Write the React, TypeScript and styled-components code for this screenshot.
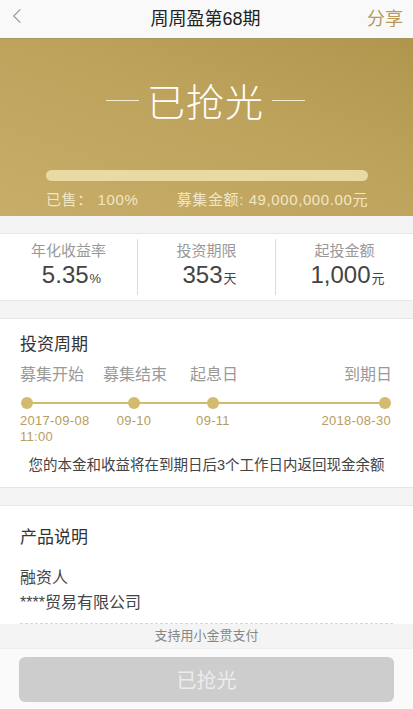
import React from 'react';
import styled, { createGlobalStyle } from 'styled-components';

const GlobalStyle = createGlobalStyle`
  body {
    margin: 0;
    background: #f4f4f4;
    font-family: "Liberation Sans", "Noto Sans CJK SC", sans-serif;
  }
`;

const stats = [
  { label: '年化收益率', value: '5.35', unit: '%' },
  { label: '投资期限', value: '353', unit: '天' },
  { label: '起投金额', value: '1,000', unit: '元' },
];

// at: left offset of the label, pos: left offset of the dot
const steps = [
  { name: '募集开始', at: 0, date: '2017-09-08', time: '11:00', pos: 0 },
  { name: '募集结束', at: 83, date: '09-10', pos: 107 },
  { name: '起息日', at: 170, date: '09-11', pos: 186 },
  { name: '到期日', at: 324, date: '2018-08-30', pos: 358 },
];

const App = () => {
  return (
    <Page>
      <GlobalStyle />
      <Header>
        <BackIcon viewBox='0 0 12 20'>
          <path d='M10 2 L2 10 L10 18' />
        </BackIcon>
        <HeaderTitle>周周盈第68期</HeaderTitle>
        <Share>分享</Share>
      </Header>

      <Banner>
        <SoldOut>
          <Rule />
          已抢光
          <Rule />
        </SoldOut>
        <Progress>
          <ProgressFill style={{ width: '100%' }} />
        </Progress>
        <BannerInfo>
          <span>已售： 100%</span>
          <span>募集金额: 49,000,000.00元</span>
        </BannerInfo>
      </Banner>

      <StatCard>
        {stats.map((s, i) => (
          <Stat key={s.label} $divider={i > 0}>
            <StatLabel>{s.label}</StatLabel>
            <StatValue>
              {s.value}
              <small>{s.unit}</small>
            </StatValue>
          </Stat>
        ))}
      </StatCard>

      <Card>
        <CardTitle>投资周期</CardTitle>
        <Timeline>
          {steps.map(s => (
            <StepName key={s.name} style={{ left: s.at }}>
              {s.name}
            </StepName>
          ))}
          <Track />
          {steps.map(s => (
            <Dot key={s.name + 'd'} style={{ left: s.pos + 1 }} />
          ))}
          {steps.map(s => (
            <StepDate key={s.name + 't'} style={{ left: s.pos }} $end={s.pos > 300} $start={s.pos === 0}>
              {s.date}
              {s.time && <br />}
              {s.time}
            </StepDate>
          ))}
        </Timeline>
        <Note>您的本金和收益将在到期日后3个工作日内返回现金余额</Note>
      </Card>

      <ProductCard>
        <CardTitle>产品说明</CardTitle>
        <InfoText>融资人</InfoText>
        <InfoText>****贸易有限公司</InfoText>
        <Dashed />
      </ProductCard>

      <Notice>支持用小金贯支付</Notice>
      <Footer>
        <SubmitButton disabled>已抢光</SubmitButton>
      </Footer>
    </Page>
  );
};

const Page = styled.div`
  width: 413px;
  min-height: 709px;
  background: #f4f4f4;
  overflow: hidden;
`;

const Header = styled.div`
  display: flex;
  align-items: center;
  justify-content: space-between;
  height: 38px;
  padding: 0 10px 0 12px;
  background: #f9f9f9;
  border-bottom: 1px solid #a8965f;
`;

const BackIcon = styled.svg`
  width: 10px;
  height: 18px;
  fill: none;
  stroke: #999;
  stroke-width: 1.4;
  margin-top: -6px;
`;

const HeaderTitle = styled.div`
  font-size: 18px;
  color: #222;
  margin-left: 22px;
  margin-top: -4px;
`;

const Share = styled.div`
  font-size: 18px;
  color: #b59a5a;
  margin-top: -4px;
`;

const Banner = styled.div`
  height: 177px;
  padding: 37px 45px 0 46px;
  box-sizing: border-box;
  background: linear-gradient(200deg, #b0964d 0%, #bea35d 45%, #c6ad69 100%);
  color: #fff;
`;

const SoldOut = styled.div`
  display: flex;
  align-items: center;
  justify-content: center;
  gap: 6px;
  font-family: "Noto Sans CJK SC", sans-serif;
  font-size: 38px;
  font-weight: 300;
  line-height: 48px;
  letter-spacing: 1px;
  margin-left: -3px;
`;

const Rule = styled.span`
  width: 33px;
  height: 1px;
  background: #f3ead0;
  margin: 0 2px;
`;

const Progress = styled.div`
  margin-top: 46px;
  height: 11px;
  border-radius: 6px;
  background: #d9c68c;
  overflow: hidden;
`;

const ProgressFill = styled.div`
  height: 100%;
  border-radius: 6px;
  background: #e9d9a3;
`;

const BannerInfo = styled.div`
  display: flex;
  justify-content: space-between;
  margin-top: 7px;
  font-size: 15px;
  letter-spacing: 0.6px;
  color: #f1e6c3;
  white-space: nowrap;
`;

const StatCard = styled.div`
  display: flex;
  align-items: center;
  margin-top: 17px;
  height: 66px;
  background: #fff;
  border-top: 1px solid #e6e6e6;
  border-bottom: 1px solid #e6e6e6;
`;

const Stat = styled.div<{ $divider: boolean }>`
  flex: 1;
  display: flex;
  flex-direction: column;
  align-items: center;
  border-left: ${p => (p.$divider ? '1px solid #dcdcdc' : 'none')};
  padding: 2px 0;
`;

const StatLabel = styled.div`
  font-size: 15px;
  color: #999;
  line-height: 20px;
`;

const StatValue = styled.div`
  font-size: 24px;
  color: #444;
  line-height: 28px;
  margin-left: 6px;

  small {
    font-size: 13px;
    margin-left: 1px;
  }
`;

const Card = styled.div`
  margin-top: 17px;
  padding: 14px 20px 12px;
  background: #fff;
  border-top: 1px solid #e6e6e6;
  border-bottom: 1px solid #e6e6e6;
`;

const CardTitle = styled.div`
  font-size: 17px;
  color: #333;
  line-height: 24px;
`;

const Timeline = styled.div`
  position: relative;
  height: 92px;
  margin-top: 6px;
`;

const StepName = styled.div`
  position: absolute;
  top: 0;
  font-size: 16px;
  color: #999;
  line-height: 24px;
  white-space: nowrap;
`;

const Track = styled.div`
  position: absolute;
  top: 39px;
  left: 7px;
  right: 6px;
  height: 2px;
  background: #d4ba6e;
`;

const Dot = styled.div`
  position: absolute;
  top: 34px;
  width: 12px;
  height: 12px;
  border-radius: 50%;
  background: #d4ba6e;
`;

const StepDate = styled.div<{ $end: boolean; $start: boolean }>`
  position: absolute;
  top: 50px;
  font-size: 13px;
  line-height: 16px;
  color: #b89d5c;
  letter-spacing: 0.3px;
  white-space: nowrap;
  transform: ${p =>
    p.$start ? 'none' : p.$end ? 'translateX(-100%) translateX(13px)' : 'translateX(-50%) translateX(7px)'};
`;

const Note = styled.div`
  font-size: 14.5px;
  color: #444;
  text-align: center;
  line-height: 20px;
`;

const ProductCard = styled.div`
  margin-top: 17px;
  padding: 20px 20px 0;
  background: #fff;
  border-top: 1px solid #e6e6e6;

  & > div:nth-child(2) {
    margin-top: 15px;
  }
`;

const InfoText = styled.div`
  font-size: 16px;
  color: #444;
  line-height: 25px;
`;

const Dashed = styled.div`
  margin-top: 8px;
  border-bottom: 1px dashed #d6d6d6;
`;

const Notice = styled.div`
  height: 24px;
  line-height: 24px;
  background: #f4f4f4;
  text-align: center;
  font-size: 13px;
  color: #888;
`;

const Footer = styled.div`
  padding: 8px 19px 8px 19px;
  background: #fafafa;
  border-top: 1px solid #efefef;
`;

const SubmitButton = styled.button`
  display: block;
  width: 100%;
  height: 45px;
  border: none;
  border-radius: 6px;
  background: #cdcdcd;
  color: #ececec;
  font-family: "Noto Sans CJK SC", sans-serif;
  font-size: 20px;
`;

export default App;
